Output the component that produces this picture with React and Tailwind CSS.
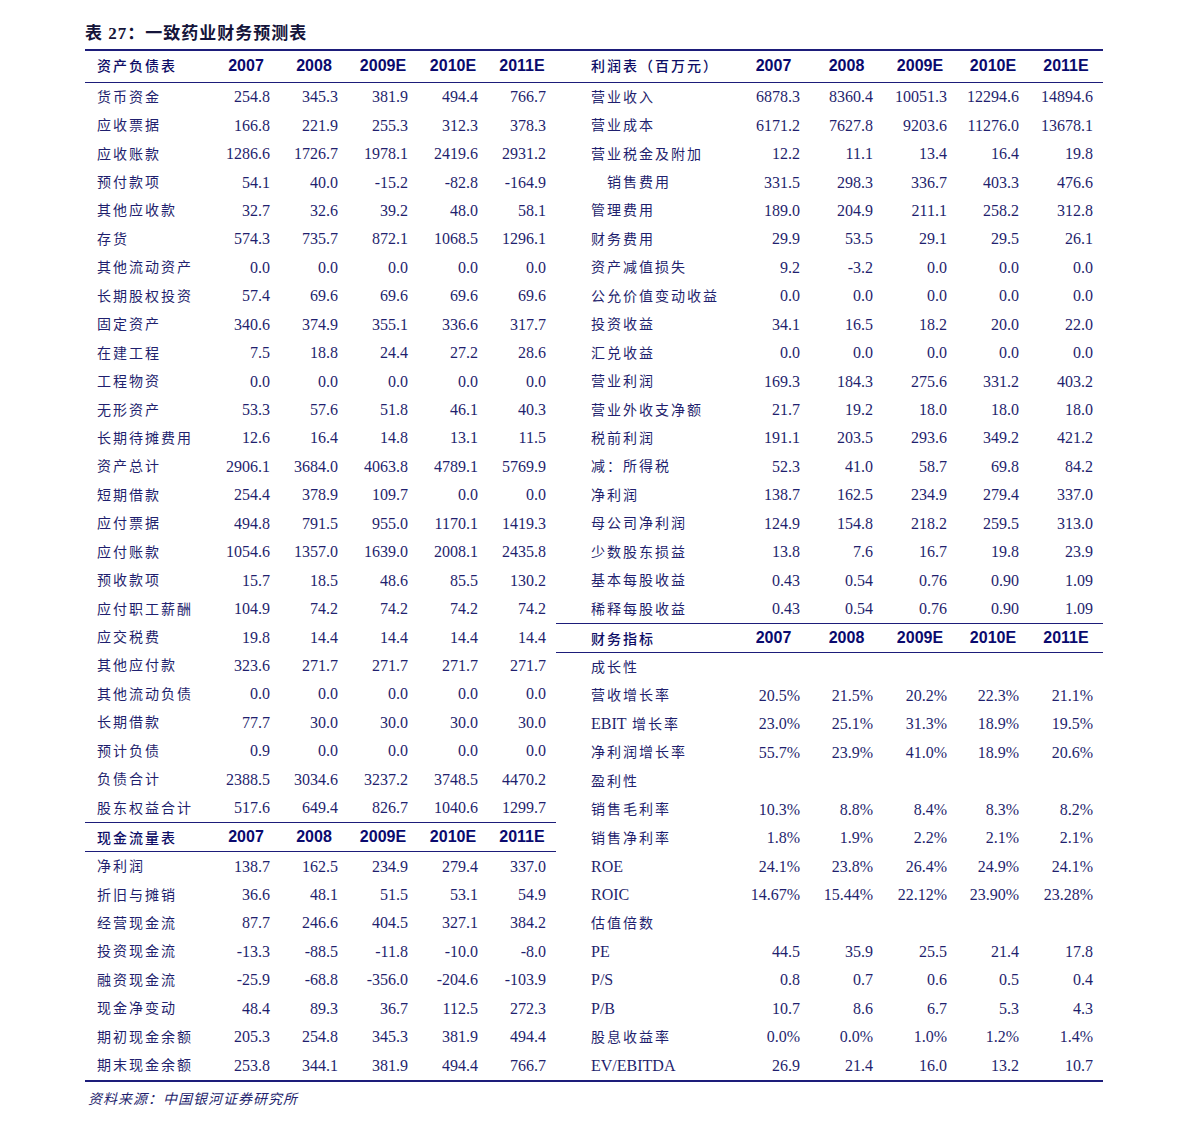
import React from "react";

const bs = [
  ["货币资金", "254.8", "345.3", "381.9", "494.4", "766.7"],
  ["应收票据", "166.8", "221.9", "255.3", "312.3", "378.3"],
  ["应收账款", "1286.6", "1726.7", "1978.1", "2419.6", "2931.2"],
  ["预付款项", "54.1", "40.0", "-15.2", "-82.8", "-164.9"],
  ["其他应收款", "32.7", "32.6", "39.2", "48.0", "58.1"],
  ["存货", "574.3", "735.7", "872.1", "1068.5", "1296.1"],
  ["其他流动资产", "0.0", "0.0", "0.0", "0.0", "0.0"],
  ["长期股权投资", "57.4", "69.6", "69.6", "69.6", "69.6"],
  ["固定资产", "340.6", "374.9", "355.1", "336.6", "317.7"],
  ["在建工程", "7.5", "18.8", "24.4", "27.2", "28.6"],
  ["工程物资", "0.0", "0.0", "0.0", "0.0", "0.0"],
  ["无形资产", "53.3", "57.6", "51.8", "46.1", "40.3"],
  ["长期待摊费用", "12.6", "16.4", "14.8", "13.1", "11.5"],
  ["资产总计", "2906.1", "3684.0", "4063.8", "4789.1", "5769.9"],
  ["短期借款", "254.4", "378.9", "109.7", "0.0", "0.0"],
  ["应付票据", "494.8", "791.5", "955.0", "1170.1", "1419.3"],
  ["应付账款", "1054.6", "1357.0", "1639.0", "2008.1", "2435.8"],
  ["预收款项", "15.7", "18.5", "48.6", "85.5", "130.2"],
  ["应付职工薪酬", "104.9", "74.2", "74.2", "74.2", "74.2"],
  ["应交税费", "19.8", "14.4", "14.4", "14.4", "14.4"],
  ["其他应付款", "323.6", "271.7", "271.7", "271.7", "271.7"],
  ["其他流动负债", "0.0", "0.0", "0.0", "0.0", "0.0"],
  ["长期借款", "77.7", "30.0", "30.0", "30.0", "30.0"],
  ["预计负债", "0.9", "0.0", "0.0", "0.0", "0.0"],
  ["负债合计", "2388.5", "3034.6", "3237.2", "3748.5", "4470.2"],
  ["股东权益合计", "517.6", "649.4", "826.7", "1040.6", "1299.7"],
];

const cf = [
  ["净利润", "138.7", "162.5", "234.9", "279.4", "337.0"],
  ["折旧与摊销", "36.6", "48.1", "51.5", "53.1", "54.9"],
  ["经营现金流", "87.7", "246.6", "404.5", "327.1", "384.2"],
  ["投资现金流", "-13.3", "-88.5", "-11.8", "-10.0", "-8.0"],
  ["融资现金流", "-25.9", "-68.8", "-356.0", "-204.6", "-103.9"],
  ["现金净变动", "48.4", "89.3", "36.7", "112.5", "272.3"],
  ["期初现金余额", "205.3", "254.8", "345.3", "381.9", "494.4"],
  ["期末现金余额", "253.8", "344.1", "381.9", "494.4", "766.7"],
];

const is = [
  ["营业收入", "6878.3", "8360.4", "10051.3", "12294.6", "14894.6"],
  ["营业成本", "6171.2", "7627.8", "9203.6", "11276.0", "13678.1"],
  ["营业税金及附加", "12.2", "11.1", "13.4", "16.4", "19.8"],
  ["　销售费用", "331.5", "298.3", "336.7", "403.3", "476.6"],
  ["管理费用", "189.0", "204.9", "211.1", "258.2", "312.8"],
  ["财务费用", "29.9", "53.5", "29.1", "29.5", "26.1"],
  ["资产减值损失", "9.2", "-3.2", "0.0", "0.0", "0.0"],
  ["公允价值变动收益", "0.0", "0.0", "0.0", "0.0", "0.0"],
  ["投资收益", "34.1", "16.5", "18.2", "20.0", "22.0"],
  ["汇兑收益", "0.0", "0.0", "0.0", "0.0", "0.0"],
  ["营业利润", "169.3", "184.3", "275.6", "331.2", "403.2"],
  ["营业外收支净额", "21.7", "19.2", "18.0", "18.0", "18.0"],
  ["税前利润", "191.1", "203.5", "293.6", "349.2", "421.2"],
  ["减：所得税", "52.3", "41.0", "58.7", "69.8", "84.2"],
  ["净利润", "138.7", "162.5", "234.9", "279.4", "337.0"],
  ["母公司净利润", "124.9", "154.8", "218.2", "259.5", "313.0"],
  ["少数股东损益", "13.8", "7.6", "16.7", "19.8", "23.9"],
  ["基本每股收益", "0.43", "0.54", "0.76", "0.90", "1.09"],
  ["稀释每股收益", "0.43", "0.54", "0.76", "0.90", "1.09"],
];

const fi = [
  ["成长性"],
  ["营收增长率", "20.5%", "21.5%", "20.2%", "22.3%", "21.1%"],
  ["EBIT 增长率", "23.0%", "25.1%", "31.3%", "18.9%", "19.5%"],
  ["净利润增长率", "55.7%", "23.9%", "41.0%", "18.9%", "20.6%"],
  ["盈利性"],
  ["销售毛利率", "10.3%", "8.8%", "8.4%", "8.3%", "8.2%"],
  ["销售净利率", "1.8%", "1.9%", "2.2%", "2.1%", "2.1%"],
  ["ROE", "24.1%", "23.8%", "26.4%", "24.9%", "24.1%"],
  ["ROIC", "14.67%", "15.44%", "22.12%", "23.90%", "23.28%"],
  ["估值倍数"],
  ["PE", "44.5", "35.9", "25.5", "21.4", "17.8"],
  ["P/S", "0.8", "0.7", "0.6", "0.5", "0.4"],
  ["P/B", "10.7", "8.6", "6.7", "5.3", "4.3"],
  ["股息收益率", "0.0%", "0.0%", "1.0%", "1.2%", "1.4%"],
  ["EV/EBITDA", "26.9", "21.4", "16.0", "13.2", "10.7"],
];

const years = ["2007", "2008", "2009E", "2010E", "2011E"];

const leftCols = ["w-[68px]", "w-[68px]", "w-[70px]", "w-[70px]", "w-[68px]"];
const rightCols = ["w-[73px]", "w-[73px]", "w-[74px]", "w-[72px]", "w-[74px]"];

const labelFont = { fontFamily: '"Liberation Serif", "Noto Sans CJK SC", serif' };
const numFont = { fontFamily: '"Liberation Serif", "Times New Roman", serif' };
const headFont = { fontFamily: '"Liberation Sans", Arial, sans-serif' };
const headCjk = { fontFamily: '"Noto Sans CJK SC", sans-serif' };

function Label({ text }) {
  const m = text.match(/^([A-Za-z/]+)(.*)$/);
  if (m) {
    return (
      <>
        <span className="text-[16px] tracking-normal">{m[1]}</span>
        {m[2] ? <span className="tracking-[2px]">{m[2]}</span> : null}
      </>
    );
  }
  return <span className="tracking-[2px]">{text}</span>;
}

function HeaderRow({ label, cols, labelW, labelPad, first }) {
  return (
    <div
      className={`flex items-center border-b border-[#1d1d7a] ${
        first ? "h-[32px] pb-[2px]" : "h-[30px] border-t"
      }`}
    >
      <div
        className={`${labelW} ${labelPad} shrink-0 text-[14px] tracking-[2px] text-[#0d0d66] font-medium`}
        style={headCjk}
      >
        {label}
      </div>
      {years.map((y, i) => (
        <div
          key={y}
          className={`${cols[i]} shrink-0 text-center text-[16px] font-bold text-[#0a0a6e]`}
          style={headFont}
        >
          {y}
        </div>
      ))}
    </div>
  );
}

function DataRow({ row, cols, labelW, labelPad }) {
  const [label, ...vals] = row;
  return (
    <div className="flex h-[28.45px] items-center text-[#1f1f6e]">
      <div
        className={`${labelW} ${labelPad} shrink-0 whitespace-nowrap text-[14px]`}
        style={labelFont}
      >
        <Label text={label} />
      </div>
      {vals.map((v, i) => (
        <div
          key={i}
          className={`${cols[i]} shrink-0 pr-[10px] text-right text-[16px]`}
          style={numFont}
        >
          {v}
        </div>
      ))}
    </div>
  );
}

export default function App() {
  return (
    <div className="w-[1191px] h-[1126px] bg-white">
      <div className="ml-[85px] w-[1018px] pt-[22px]">
        <div
          className="h-[24px] text-[17px] font-bold text-[#14143a] leading-[24px] tracking-[1px]"
          style={labelFont}
        >
          表 27：一致药业财务预测表
        </div>
        <div className="mt-[3px] flex border-t-2 border-b-2 border-[#1d1d7a]">
          <div className="w-[471px] shrink-0">
            <HeaderRow label="资产负债表" cols={leftCols} labelW="w-[127px]" labelPad="pl-[12px]" first />
            {bs.map((r) => (
              <DataRow key={r[0]} row={r} cols={leftCols} labelW="w-[127px]" labelPad="pl-[12px]" />
            ))}
            <HeaderRow label="现金流量表" cols={leftCols} labelW="w-[127px]" labelPad="pl-[12px]" />
            {cf.map((r) => (
              <DataRow key={r[0]} row={r} cols={leftCols} labelW="w-[127px]" labelPad="pl-[12px]" />
            ))}
          </div>
          <div className="w-[547px] shrink-0">
            <HeaderRow label="利润表（百万元）" cols={rightCols} labelW="w-[181px]" labelPad="pl-[35px]" first />
            {is.map((r) => (
              <DataRow key={r[0]} row={r} cols={rightCols} labelW="w-[181px]" labelPad="pl-[35px]" />
            ))}
            <HeaderRow label="财务指标" cols={rightCols} labelW="w-[181px]" labelPad="pl-[35px]" />
            {fi.map((r) => (
              <DataRow key={r[0]} row={r} cols={rightCols} labelW="w-[181px]" labelPad="pl-[35px]" />
            ))}
          </div>
        </div>
        <div
          className="mt-[6px] pl-[3px] text-[14px] italic tracking-[1px] text-[#1f1f6e]"
          style={headCjk}
        >
          资料来源：中国银河证券研究所
        </div>
      </div>
    </div>
  );
}
